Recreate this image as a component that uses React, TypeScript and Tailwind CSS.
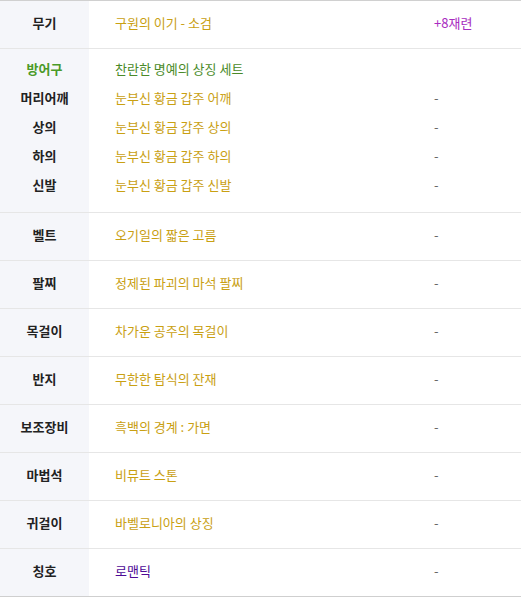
import React from 'react';

type Row = { label: string; value: string; extra?: string; valueColor?: string; extraColor?: string };

const GOLD = 'text-[#c9a012]';

const rows: Row[] = [
  { label: '벨트', value: '오기일의 짧은 고름' },
  { label: '팔찌', value: '정제된 파괴의 마석 팔찌' },
  { label: '목걸이', value: '차가운 공주의 목걸이' },
  { label: '반지', value: '무한한 탐식의 잔재' },
  { label: '보조장비', value: '흑백의 경계 : 가면' },
  { label: '마법석', value: '비뮤트 스톤' },
  { label: '귀걸이', value: '바벨로니아의 상징' },
  { label: '칭호', value: '로맨틱', valueColor: 'text-[#4e0a96]' },
];

const armor = [
  { label: '머리어깨', value: '눈부신 황금 갑주 어깨' },
  { label: '상의', value: '눈부신 황금 갑주 상의' },
  { label: '하의', value: '눈부신 황금 갑주 하의' },
  { label: '신발', value: '눈부신 황금 갑주 신발' },
];

const EquipRow: React.FC<{ row: Row; border?: string }> = ({ row, border = 'border-b border-[#e6e6e6]' }) => (
  <div className={`flex h-[48px] ${border}`}>
    <div className="w-[89px] bg-[#f5f6fa] flex items-center justify-center font-bold text-[#222] pb-[5px]">
      {row.label}
    </div>
    <div className={`w-[345px] pl-[26px] flex items-center pb-[5px] ${row.valueColor ?? GOLD}`}>{row.value}</div>
    <div className={`flex-1 flex items-center pb-[5px] ${row.extraColor ?? 'text-[#666]'}`}>{row.extra ?? '-'}</div>
  </div>
);

export default function App() {
  return (
    <div
      className="w-[521px] h-[602px] bg-white text-[13px] leading-none"
      style={{ fontFamily: '"Noto Sans CJK KR", "Noto Sans", sans-serif' }}
    >
      <div className="border-t border-[#d0d0d0]">
        <EquipRow row={{ label: '무기', value: '구원의 이기 - 소검', extra: '+8재련', extraColor: 'text-[#a82cc0]' }} />

        {/* 방어구 세트 */}
        <div className="flex border-b border-[#e6e6e6] h-[164px]">
          <div className="w-[89px] bg-[#f5f6fa] flex flex-col pt-[5px] font-bold text-[#222]">
            <div className="h-[29px] flex items-center justify-center text-[#4a9a28]">방어구</div>
            {armor.map((a) => (
              <div key={a.label} className="h-[29px] flex items-center justify-center">{a.label}</div>
            ))}
          </div>
          <div className="w-[345px] pl-[26px] flex flex-col pt-[5px]">
            <div className="h-[29px] flex items-center text-[#4a8a28]">찬란한 명예의 상징 세트</div>
            {armor.map((a) => (
              <div key={a.label} className={`h-[29px] flex items-center ${GOLD}`}>{a.value}</div>
            ))}
          </div>
          <div className="flex-1 flex flex-col pt-[5px] text-[#666]">
            <div className="h-[29px]" />
            {armor.map((a) => (
              <div key={a.label} className="h-[29px] flex items-center">-</div>
            ))}
          </div>
        </div>

        {rows.map((r, i) => (
          <EquipRow
            key={r.label}
            row={r}
            border={i === rows.length - 1 ? 'border-b border-[#cfcfcf]' : 'border-b border-[#e6e6e6]'}
          />
        ))}
      </div>
    </div>
  );
}
